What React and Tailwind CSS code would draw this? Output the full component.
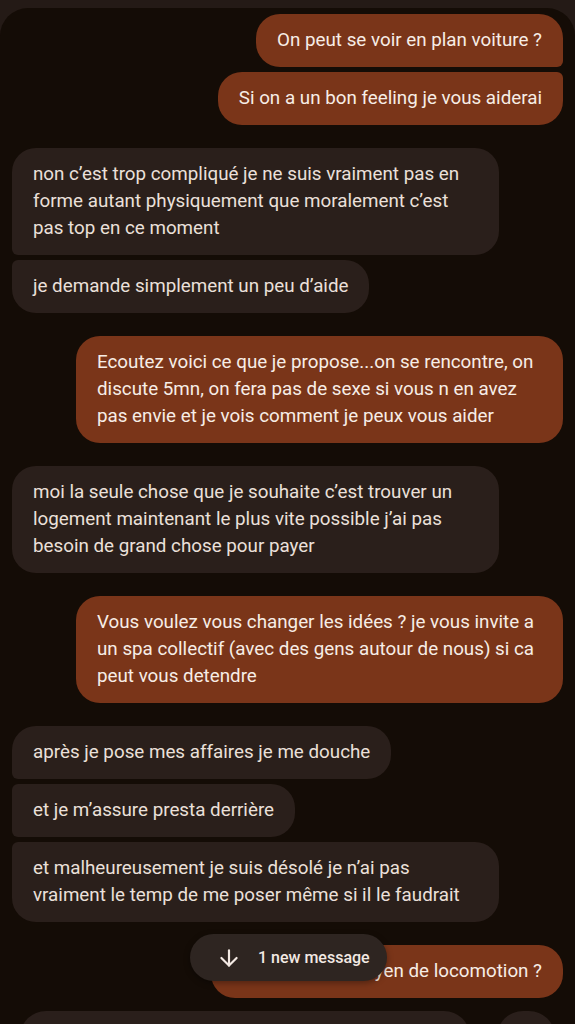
import { ArrowDown } from 'lucide-react'

const groups = [
  {
    out: true,
    items: [
      { lines: ['On peut se voir en plan voiture ?'] },
      { lines: ['Si on a un bon feeling je vous aiderai'] },
    ],
  },
  {
    out: false,
    items: [
      {
        lines: [
          'non c\u2019est trop compliqué je ne suis vraiment pas en',
          'forme autant physiquement que moralement c\u2019est',
          'pas top en ce moment',
        ],
        wide: true,
      },
      { lines: ['je demande simplement un peu d\u2019aide'] },
    ],
  },
  {
    out: true,
    items: [
      {
        lines: [
          'Ecoutez voici ce que je propose...on se rencontre, on',
          'discute 5mn, on fera pas de sexe si vous n en avez',
          'pas envie et je vois comment je peux vous aider',
        ],
        wide: true,
      },
    ],
  },
  {
    out: false,
    items: [
      {
        lines: [
          'moi la seule chose que je souhaite c\u2019est trouver un',
          'logement maintenant le plus vite possible j\u2019ai pas',
          'besoin de grand chose pour payer',
        ],
        wide: true,
      },
    ],
  },
  {
    out: true,
    items: [
      {
        lines: [
          'Vous voulez vous changer les idées ? je vous invite a',
          'un spa collectif (avec des gens autour de nous) si ca',
          'peut vous detendre',
        ],
        wide: true,
      },
    ],
  },
  {
    out: false,
    items: [
      { lines: ['après je pose mes affaires je me douche'] },
      { lines: ['et je m\u2019assure presta derrière'] },
      {
        lines: [
          'et malheureusement je suis désolé je n\u2019ai pas',
          'vraiment le temp de me poser même si il le faudrait',
        ],
        wide: true,
      },
    ],
  },
  {
    out: true,
    items: [{ lines: ['Vous avez un moyen de locomotion ?'] }],
  },
]

const cornerClass = (out, i, n) => {
  const first = i === 0
  const last = i === n - 1
  if (out) {
    if (n === 1) return 'rounded-[24px]'
    if (first) return 'rounded-[24px] rounded-br-[6px]'
    if (last) return 'rounded-[24px] rounded-tr-[6px]'
    return 'rounded-[24px] rounded-tr-[6px] rounded-br-[6px]'
  }
  if (n === 1) return 'rounded-[24px]'
  if (first) return 'rounded-[24px] rounded-bl-[6px]'
  if (last) return 'rounded-[24px] rounded-tl-[6px]'
  return 'rounded-[24px] rounded-tl-[6px] rounded-bl-[6px]'
}

const Bubble = ({ out, item, i, n }) => {
  return (
    <div
      className={
        'py-[13px] px-[21px] text-[18.8px] leading-[27px] ' +
        (item.wide ? 'w-[487px] ' : 'w-fit ') +
        (out ? 'bg-[#7a3519] text-[#f7ede6] ' : 'bg-[#2a1f1b] text-[#ebe0da] ') +
        cornerClass(out, i, n)
      }
    >
      {item.lines.map((l, k) => (
        <div key={k} className="whitespace-nowrap">
          {l}
        </div>
      ))}
    </div>
  )
}

export default function App() {
  return (
    <div
      className="w-[575px] h-[1024px] overflow-hidden bg-[#241a16] pt-2 relative"
      style={{ fontFamily: 'Roboto, "Noto Sans", sans-serif' }}
    >
      <div className="h-full bg-[#140c06] rounded-t-[28px] pt-[6px] px-3 flex flex-col gap-[23px]">
        {groups.map((g, gi) => (
          <div
            key={gi}
            className={'flex flex-col gap-[5px] ' + (g.out ? 'items-end' : 'items-start')}
          >
            {g.items.map((item, i) => (
              <Bubble key={i} out={g.out} item={item} i={i} n={g.items.length} />
            ))}
          </div>
        ))}

        {/* compose bar, cut off by the bottom edge */}
        <div className="flex items-start gap-[27px] px-2 -mt-[10px]">
          <div className="h-[52px] w-[450px] rounded-[26px] bg-[#2a1f1b]" />
          <div className="h-[52px] w-[58px] rounded-full bg-[#2a1f1b]" />
        </div>
      </div>

      {/* new message pill */}
      <div className="absolute left-[190px] top-[934px] h-[47px] w-[197px] rounded-full bg-[#2e2521] flex items-center pl-[26px] gap-[16px] text-[#f3e9e3] shadow-[0_2px_6px_rgba(0,0,0,0.35)]">
        <ArrowDown size={26} strokeWidth={2} />
        <span className="text-[16px] font-medium">1 new message</span>
      </div>
    </div>
  )
}
